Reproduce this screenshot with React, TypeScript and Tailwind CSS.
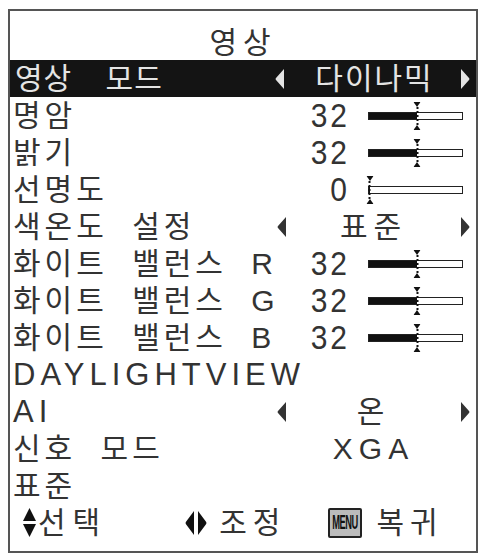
import React from 'react';

// ── OSD menu (projector picture settings) ─────────────────────────────────────

const FONT = "font-['Liberation_Sans','Noto_Sans_CJK_KR',sans-serif]";

function LeftArrow({ className = '', h = 20 }: { className?: string; h?: number }) {
  return (
    <svg width="9" height={h} viewBox="0 0 9 20" preserveAspectRatio="none" className={className}>
      <path d="M9 0 L1 9 Q0 10 1 11 L9 20 Z" fill="currentColor" />
    </svg>
  );
}

function RightArrow({ className = '', h = 20 }: { className?: string; h?: number }) {
  return (
    <svg width="9" height={h} viewBox="0 0 9 20" preserveAspectRatio="none" className={className}>
      <path d="M0 0 L8 9 Q9 10 8 11 L0 20 Z" fill="currentColor" />
    </svg>
  );
}

function Slider({ pct }: { pct: number }) {
  return (
    <div className="relative w-[95px] h-[8px] border border-[#222] bg-white">
      <div className="h-full bg-[#111]" style={{ width: `${pct}%` }} />
      {/* marker */}
      <div
        className="absolute top-[-11px] flex h-[28px] w-[7px] -translate-x-1/2 flex-col items-center justify-between"
        style={{ left: `${pct}%` }}
      >
        <svg width="7" height="5" viewBox="0 0 7 5">
          <path d="M0 0 H7 L3.5 5 Z" fill="#111" />
        </svg>
        <div className="w-0 flex-1 border-l-2 border-dotted border-[#111]" />
        <svg width="7" height="5" viewBox="0 0 7 5">
          <path d="M0 5 H7 L3.5 0 Z" fill="#111" />
        </svg>
      </div>
    </div>
  );
}

function SliderValue({ value, pct }: { value: string; pct: number }) {
  return (
    <div className="flex w-[204px] items-center">
      <span className="inline-block w-[78px] scale-y-[1.12] text-right tracking-[3px]">{value}</span>
      <div className="ml-[18px]">
        <Slider pct={pct} />
      </div>
    </div>
  );
}

function ArrowValue({ value, arrows = true }: { value: string; arrows?: boolean }) {
  return (
    <div className="flex w-[204px] items-center">
      <LeftArrow className={`ml-[5px] ${arrows ? '' : 'invisible'}`} />
      <span className="flex-1 text-center tracking-[6px]">{value}</span>
      <RightArrow className={`mr-[6px] ${arrows ? '' : 'invisible'}`} />
    </div>
  );
}

function Row({ label, right, latin }: { label: string; right?: React.ReactNode; latin?: boolean }) {
  return (
    <div className="flex h-[37px] items-center">
      <span
        className={`min-w-0 flex-1 whitespace-nowrap pl-[3px] [word-spacing:12px] ${
          latin ? 'text-[31px] tracking-[5px]' : 'tracking-[4px]'
        }`}
      >
        {label}
      </span>
      {right && <div className="shrink-0">{right}</div>}
    </div>
  );
}

export default function App() {
  return (
    <div className={`w-[485px] h-[556px] bg-white pl-[8px] pt-[9px] text-[30px] leading-none text-[#333] ${FONT}`}>
      <div className="flex h-[544px] w-[470px] flex-col border-2 border-[#555] pb-[10px]">
        {/* Title */}
        <div className="flex h-[49px] items-end justify-center pb-[2px] tracking-[6px]">영상</div>

        {/* Selected row */}
        <div className="flex h-[37px] items-center bg-[#141414] text-[#e4e4e4]">
          <span className="min-w-0 flex-1 whitespace-nowrap pl-[5px] tracking-[1px] [word-spacing:24px]">
            영상 모드
          </span>
          <div className="flex w-[204px] items-center">
            <LeftArrow className="ml-[3px]" />
            <span className="flex-1 pl-[4px] text-center tracking-[2px]">다이나믹</span>
            <RightArrow className="mr-[6px]" />
          </div>
        </div>

        <Row label="명암" right={<SliderValue value="32" pct={52} />} />
        <Row label="밝기" right={<SliderValue value="32" pct={52} />} />
        <Row label="선명도" right={<SliderValue value="0" pct={1} />} />
        <Row label="색온도 설정" right={<ArrowValue value="표준" />} />
        <Row label="화이트 밸런스 R" right={<SliderValue value="32" pct={52} />} />
        <Row label="화이트 밸런스 G" right={<SliderValue value="32" pct={52} />} />
        <Row label="화이트 밸런스 B" right={<SliderValue value="32" pct={52} />} />
        <Row label="DAYLIGHTVIEW" latin />
        <Row label="AI" latin right={<ArrowValue value="온" />} />
        <Row label="신호 모드" right={<ArrowValue value="XGA" arrows={false} />} />
        <Row label="표준" />

        {/* Footer hints */}
        <div className="flex h-[37px] items-center">
          <div className="ml-[13px] flex flex-col gap-[3px]">
            <svg width="13" height="13" viewBox="0 0 13 13">
              <path d="M6.5 0 L13 13 H0 Z" fill="#111" />
            </svg>
            <svg width="13" height="13" viewBox="0 0 13 13">
              <path d="M0 0 H13 L6.5 13 Z" fill="#111" />
            </svg>
          </div>
          <span className="ml-[2px] tracking-[7px]">선택</span>

          <div className="ml-[78px] flex items-center gap-[4px] text-[#111]">
            <LeftArrow h={24} />
            <RightArrow h={24} />
          </div>
          <span className="ml-[12px] tracking-[6px]">조정</span>

          <div className="ml-[42px] flex h-[30px] w-[34px] items-center justify-center overflow-hidden rounded-[2px] border-2 border-[#222] bg-[#bbb]">
            <span className="scale-x-[0.55] scale-y-[1.2] text-[17px] font-bold tracking-[-1px] text-[#111]">MENU</span>
          </div>
          <span className="ml-[14px] tracking-[6px]">복귀</span>
        </div>
      </div>
    </div>
  );
}
